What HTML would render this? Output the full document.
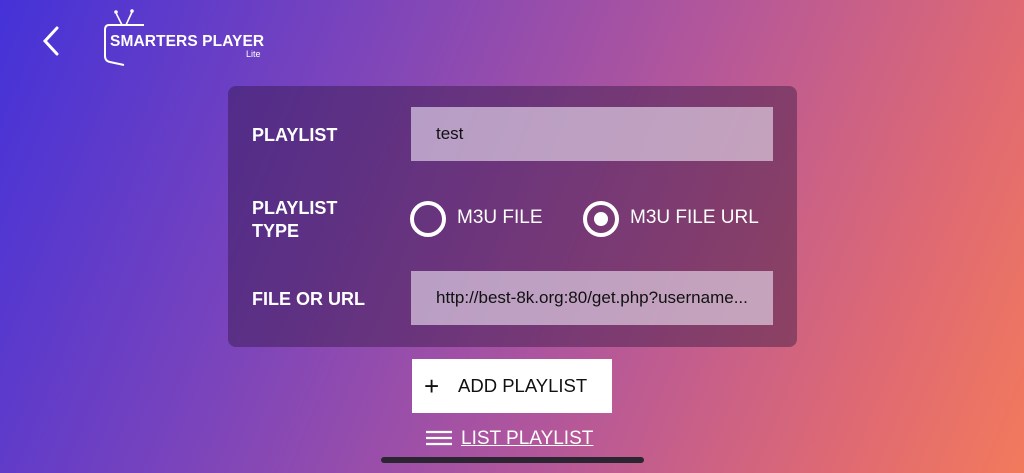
<!DOCTYPE html>
<html><head><meta charset="utf-8"><style>
*{margin:0;padding:0;box-sizing:border-box}
body{width:1024px;height:473px;overflow:hidden;position:relative;font-family:"Liberation Sans",sans-serif;
background:linear-gradient(112deg,#4432d8 0%,#7a44bc 30%,#b4579a 60%,#e06a72 85%,#f27a5c 100%);}
.panel{position:absolute;left:228px;top:86px;width:569px;height:261px;border-radius:8px;background:rgba(45,20,60,0.42)}
.lbl{position:absolute;left:252px;color:#fff;font-size:18px;font-weight:bold;line-height:23px}
.field{position:absolute;left:411px;width:362px;height:54px;background:rgba(235,225,240,0.62);color:#111;font-size:17px;line-height:54px;padding-left:25px}
.radio{position:absolute;width:36px;height:36px;border:4px solid #fff;border-radius:50%}
.rt{position:absolute;color:#fff;font-size:19px;top:207px}
.btn{position:absolute;left:412px;top:359px;width:200px;height:54px;background:#fff;color:#111;font-size:18.5px;line-height:54px}
</style></head><body>
<svg style="position:absolute;left:40px;top:26px" width="22" height="30"><path d="M17 2 L5 15 L17 28" stroke="#fff" stroke-width="3" fill="none" stroke-linecap="round"/></svg>
<svg style="position:absolute;left:100px;top:6px" width="60" height="64">
<path d="M18 19 L9 19 Q5 19 5 24 L5 50 Q5 55 10 56 L24 59" stroke="#fff" stroke-width="2" fill="none"/>
<path d="M22 19 L16 7 M26 19 L32 6" stroke="#fff" stroke-width="1.6"/><circle cx="16" cy="6" r="1.8" fill="#fff"/><circle cx="32" cy="5" r="1.8" fill="#fff"/>
<path d="M18 19 L44 19" stroke="#fff" stroke-width="2"/></svg>
<div style="position:absolute;left:110px;top:33px;color:#fff;font-weight:bold;font-size:15.5px;letter-spacing:0.1px">SMARTERS PLAYER</div>
<div style="position:absolute;left:246px;top:49px;color:#fff;font-size:9px">Lite</div>
<div class="panel"></div>
<div class="lbl" style="top:124px">PLAYLIST</div>
<div class="lbl" style="top:197px">PLAYLIST<br>TYPE</div>
<div class="lbl" style="top:288px">FILE OR URL</div>
<div class="field" style="top:107px">test</div>
<div class="field" style="top:271px">http://best-8k.org:80/get.php?username...</div>
<div class="radio" style="left:410px;top:201px"></div>
<div class="rt" style="left:457px">M3U FILE</div>
<div class="radio" style="left:583px;top:201px"><div style="position:absolute;left:7px;top:7px;width:14px;height:14px;border-radius:50%;background:#fff"></div></div>
<div class="rt" style="left:630px">M3U FILE URL</div>
<div class="btn"><span style="position:absolute;left:12px;font-size:26px;font-weight:300">+</span><span style="position:absolute;left:46px">ADD PLAYLIST</span></div>
<svg style="position:absolute;left:426px;top:430px" width="26" height="16"><path d="M0 2H26M0 8H26M0 14H26" stroke="#fff" stroke-width="2.2"/></svg>
<div style="position:absolute;left:461px;top:428px;color:#fff;font-size:19px;text-decoration:underline">LIST PLAYLIST</div>
<div style="position:absolute;left:381px;top:457px;width:263px;height:6px;border-radius:3px;background:#2a2530"></div>
</body></html>
